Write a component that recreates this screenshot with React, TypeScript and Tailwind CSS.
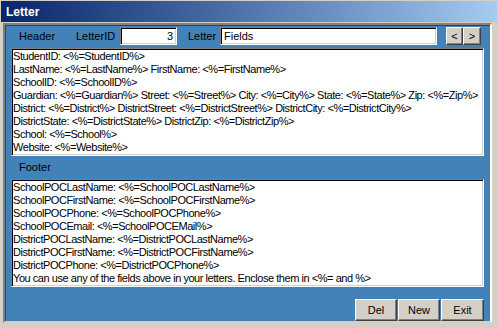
const headerLines = [
  "StudentID: <%=StudentID%>",
  "LastName: <%=LastName%> FirstName: <%=FirstName%>",
  "SchoolID: <%=SchoolID%>",
  "Guardian: <%=Guardian%> Street: <%=Street%> City: <%=City%> State: <%=State%> Zip: <%=Zip%>",
  "District: <%=District%> DistrictStreet: <%=DistrictStreet%> DistrictCity: <%=DistrictCity%>",
  "DistrictState: <%=DistrictState%> DistrictZip: <%=DistrictZip%>",
  "School: <%=School%>",
  "Website: <%=Website%>",
];

const footerLines = [
  "SchoolPOCLastName: <%=SchoolPOCLastName%>",
  "SchoolPOCFirstName: <%=SchoolPOCFirstName%>",
  "SchoolPOCPhone: <%=SchoolPOCPhone%>",
  "SchoolPOCEmail: <%=SchoolPOCEMail%>",
  "DistrictPOCLastName: <%=DistrictPOCLastName%>",
  "DistrictPOCFirstName: <%=DistrictPOCFirstName%>",
  "DistrictPOCPhone: <%=DistrictPOCPhone%>",
  "You can use any of the fields above in your letters. Enclose them in <%= and %>",
];

// sunken 3d box (text boxes)
const sunken =
  "bg-white border border-t-[#808080] border-l-[#808080] border-r-white border-b-white shadow-[inset_1px_1px_0_#000,inset_-1px_-1px_0_#d4d0c8]";

// raised 3d button
const raised =
  "bg-[#d4d0c8] border border-t-white border-l-white border-r-[#404040] border-b-[#404040] shadow-[inset_-1px_-1px_0_#808080] flex items-center justify-center text-black";

function Memo({ lines }: { lines: string[] }) {
  return (
    <div className={`${sunken} h-[108px] pl-[1px] pt-[1px] overflow-hidden`}>
      {lines.map((l, i) => (
        <div key={i} className="text-[11px] leading-[13px] tracking-[-0.45px] whitespace-nowrap text-black">
          {l}
        </div>
      ))}
    </div>
  );
}

export default function App() {
  return (
    <div
      className="w-[498px] h-[328px] bg-[#d4d0c8] flex flex-col overflow-hidden"
      style={{ fontFamily: '"Liberation Sans", Arial, sans-serif' }}
    >
      {/* title bar */}
      <div className="h-[21px] mt-[1px] mx-[1px] bg-gradient-to-r from-[#0a246a] to-[#a6caf0] flex items-center pl-[5px]">
        <span className="text-white font-bold text-[12px]">Letter</span>
      </div>

      {/* blue form body */}
      <div className="mt-[1px] ml-[3px] w-[489px] h-[300px] bg-[#4282b8] border-2 border-t-[#808080] border-l-[#808080] border-r-white border-b-[#d4d0c8] shadow-[inset_1px_1px_0_#404040] flex flex-col px-[6px] pt-[2px]">
        {/* header row */}
        <div className="h-[18px] flex items-center text-[11px] text-black">
          <span className="w-[65px] pl-[8px]">Header</span>
          <span className="w-[44px]">LetterID</span>
          <div className={`${sunken} w-[57px] h-[18px] flex items-center justify-end pr-[3px]`}>3</div>
          <span className="w-[32px] ml-[11px]">Letter</span>
          <div className={`${sunken} w-[217px] h-[18px] flex items-center pl-[3px]`}>Fields</div>
          <div className="flex ml-[9px]">
            <div className={`${raised} w-[17px] h-[18px] text-[11px]`}>&lt;</div>
            <div className={`${raised} w-[18px] h-[18px] text-[11px]`}>&gt;</div>
          </div>
        </div>

        <div className="mt-[3px]">
          <Memo lines={headerLines} />
        </div>

        <div className="h-[23px] flex items-center pl-[8px] text-[11px] text-black">Footer</div>

        <Memo lines={footerLines} />

        <div className="mt-[12px] flex justify-end">
          <div className={`${raised} w-[42px] h-[22px] text-[11px]`}>Del</div>
          <div className={`${raised} w-[42px] h-[22px] text-[11px] ml-[1px]`}>New</div>
          <div className={`${raised} w-[43px] h-[22px] text-[11px] ml-[1px]`}>Exit</div>
        </div>
      </div>
    </div>
  );
}
